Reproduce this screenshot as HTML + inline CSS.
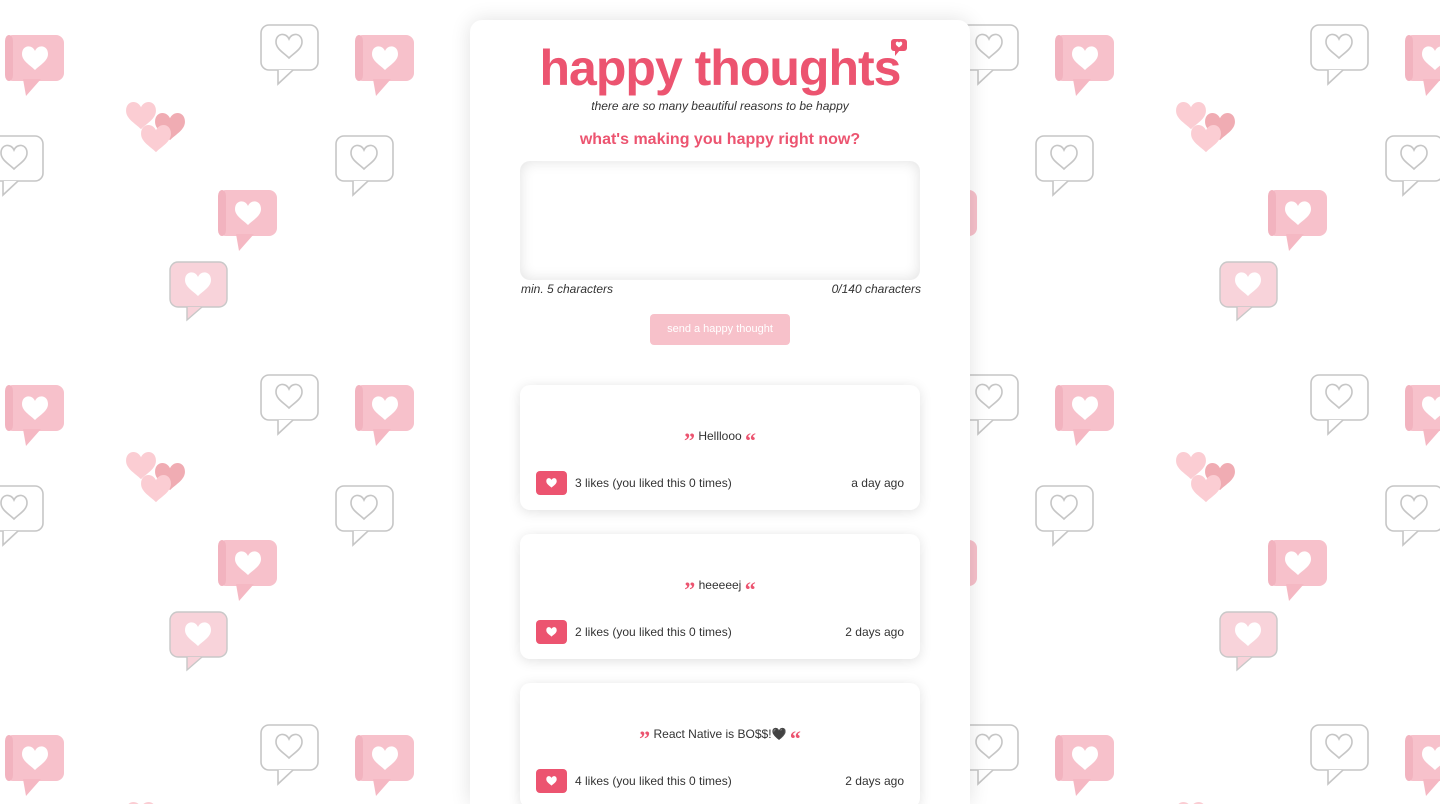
<!DOCTYPE html>
<html><head><meta charset="utf-8"><style>
html,body{margin:0;padding:0;width:1440px;height:804px;overflow:hidden;background:#fff;font-family:"Liberation Sans",sans-serif}
#bg{position:absolute;left:0;top:0}
.card{position:absolute;left:470px;top:20px;width:500px;height:784px;background:#fff;border-radius:12px 12px 0 0;box-shadow:0 0 20px rgba(0,0,0,.12);overflow:hidden}
h1{position:absolute;left:0;width:500px;top:18px;margin:0;text-align:center;font-size:50px;font-weight:bold;color:#ec5470;letter-spacing:-1px;line-height:60px}
.sub{position:absolute;left:0;width:500px;top:79px;text-align:center;font-size:12px;font-style:italic;color:#333}
.q{position:absolute;left:0;width:500px;top:111px;text-align:center;font-size:16px;font-weight:bold;color:#ec5470}
.ta{position:absolute;left:50px;top:141px;width:400px;height:119px;border-radius:10px;box-shadow:inset 0 0 14px rgba(0,0,0,.12)}
.hint{position:absolute;top:262px;font-size:12px;font-style:italic;color:#333}
.btn{position:absolute;left:180px;top:294px;width:140px;height:31px;border-radius:4px;background:#f7c1ca;color:#fff;font-size:11px;text-align:center;line-height:31px}
.t{position:absolute;left:50px;width:400px;height:125px;border-radius:10px;background:#fff;box-shadow:0 2px 12px rgba(0,0,0,.12)}
.msg{position:absolute;top:42px;left:0;width:400px;text-align:center;font-size:12px;color:#333;line-height:18px}
.qm{color:#ec5470;font-weight:bold;font-size:22px;font-family:"Liberation Serif",serif;vertical-align:-8px;line-height:10px}
.lk{position:absolute;left:16px;top:86px;width:31px;height:24px;border-radius:4px;background:#ec5470}
.lt{position:absolute;left:55px;top:91px;font-size:12px;color:#333}
.tm{position:absolute;right:16px;top:91px;font-size:12px;color:#333}
</style></head><body>
<svg id="bg" width="1440" height="804">
<defs>
<path id="h" d="M0,-5 C-3,-12 -13,-11 -13,-2 C-13,5 -5,9 0,14 C5,9 13,5 13,-2 C13,-11 3,-12 0,-5Z"/>
<g id="pb"><rect x="0" y="0" width="59" height="46" rx="8" fill="#f7c1cb"/><rect x="0" y="0" width="8" height="46" rx="6" fill="#f2b3bf"/><polygon points="18,44 21,61 36,44" fill="#f5b8c3"/><use href="#h" x="30" y="21" fill="#fff"/></g>
<g id="gb"><rect x="1" y="1" width="57" height="45" rx="8" fill="#fff" stroke="#c6c6c6" stroke-width="1.6"/><path d="M18,46 L18,60 L33,46" fill="#fff" stroke="#c6c6c6" stroke-width="1.6"/><use href="#h" x="29" y="20" fill="none" stroke="#c6c6c6" stroke-width="1.6"/></g>
<g id="lb"><rect x="1" y="1" width="57" height="45" rx="8" fill="#f8d3da" stroke="#c8c8c8" stroke-width="1.4"/><path d="M18,46 L18,59 L33,46" fill="#f8d3da" stroke="#c8c8c8" stroke-width="1.4"/><use href="#h" x="29" y="21" fill="#fff"/></g>
<g id="hc"><g transform="translate(15,13) scale(1.15)"><use href="#h" fill="#fbcdd3"/></g><g transform="translate(44,24) scale(1.15)"><use href="#h" fill="#f0acb3"/></g><g transform="translate(30,36) scale(1.15)"><use href="#h" fill="#fbcdd3"/></g></g>
<pattern id="p" x="0" y="0" width="350" height="350" patternUnits="userSpaceOnUse">
<use href="#pb" x="5" y="35"/><use href="#gb" x="260" y="24"/><use href="#hc" x="126" y="100"/>
<use href="#gb" x="335" y="135"/><use href="#gb" x="-15" y="135"/><use href="#pb" x="218" y="190"/><use href="#lb" x="169" y="261"/>
</pattern></defs>
<rect width="1440" height="804" fill="url(#p)"/>
</svg>
<div class="card">
<h1>happy thoughts</h1>
<svg style="position:absolute;left:421px;top:19px" width="16" height="18"><rect x="0" y="0" width="16" height="12" rx="3" fill="#ec5470"/><polygon points="4,11 4,17 9,11" fill="#ec5470"/><g transform="translate(8,5) scale(.25)"><use href="#h" fill="#fff"/></g></svg>
<div class="sub">there are so many beautiful reasons to be happy</div>
<div class="q">what's making you happy right now?</div>
<div class="ta"></div>
<div class="hint" style="left:51px">min. 5 characters</div>
<div class="hint" style="right:49px">0/140 characters</div>
<div class="btn">send a happy thought</div>
<div class="t" style="top:365px"><div class="msg"><span class="qm">&#8221;</span> Helllooo <span class="qm">&#8220;</span></div><div class="lk"><svg width="31" height="24"><g transform="translate(15.5,11) scale(.4)"><use href="#h" fill="#fff"/></g></svg></div><div class="lt">3 likes (you liked this 0 times)</div><div class="tm">a day ago</div></div>
<div class="t" style="top:514px"><div class="msg"><span class="qm">&#8221;</span> heeeeej <span class="qm">&#8220;</span></div><div class="lk"><svg width="31" height="24"><g transform="translate(15.5,11) scale(.4)"><use href="#h" fill="#fff"/></g></svg></div><div class="lt">2 likes (you liked this 0 times)</div><div class="tm">2 days ago</div></div>
<div class="t" style="top:663px"><div class="msg"><span class="qm">&#8221;</span> React Native is BO$$!&#128420; <span class="qm">&#8220;</span></div><div class="lk"><svg width="31" height="24"><g transform="translate(15.5,11) scale(.4)"><use href="#h" fill="#fff"/></g></svg></div><div class="lt">4 likes (you liked this 0 times)</div><div class="tm">2 days ago</div></div>
</div>
</body></html>
